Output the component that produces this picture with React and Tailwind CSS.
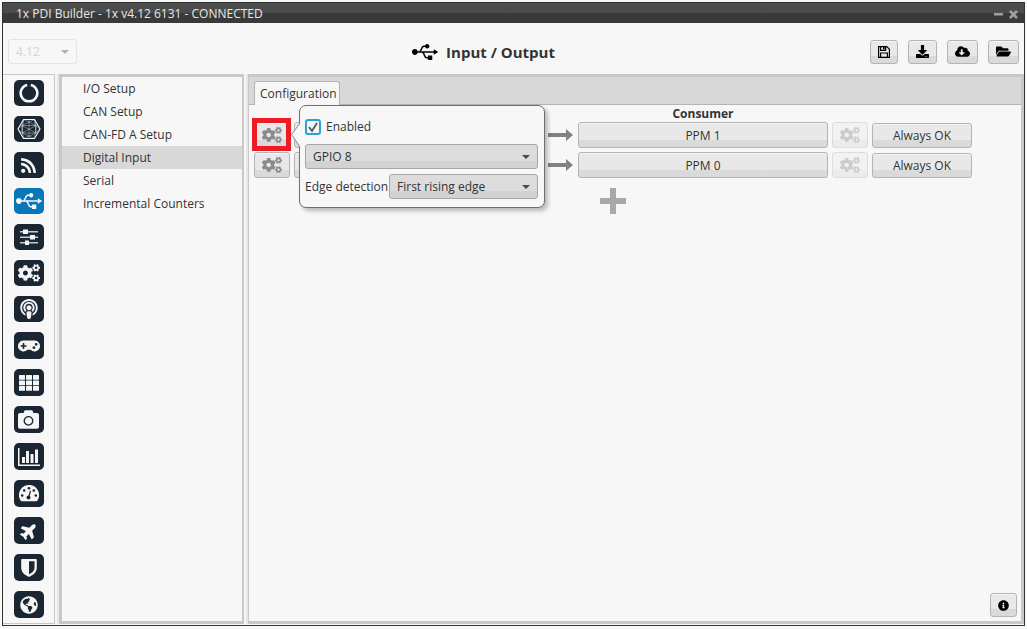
import { useState } from "react";
import {
  FaUsb,
  FaRss,
  FaCogs,
  FaPodcast,
  FaGamepad,
  FaCamera,
  FaPlane,
  FaGlobeAmericas,
  FaDownload,
  FaCloudDownloadAlt,
  FaFolderOpen,
  FaInfoCircle,
} from "react-icons/fa";

// Icons
const RingIcon = () => (
  <svg width="20" height="20" viewBox="0 0 20 20" fill="none" stroke="currentColor" strokeWidth="2.6">
    <path d="M8.2 1.9A8.3 8.3 0 1 0 11.8 1.9" />
  </svg>
);

const MeshIcon = () => (
  <svg width="24" height="22" viewBox="0 0 24 22" fill="none" stroke="currentColor">
    <path d="M6.5 1.5h11L23 11l-5.5 9.5h-11L1 11z" strokeWidth="1.1" />
    <path
      d="M6.5 1.5L19 7.5 17.5 20.5 5 15zM17.5 1.5L5 7.5 6.5 20.5 19 15zM1 11l4-3.500v7.500zM23 11l-4-3.500v7.500zM5 7.500h14M5 15h14M12 1.500v19M6.500 1.500L5 7.500M17.500 1.500L19 7.500M5 7.500L19 15M19 7.500L5 15"
      strokeWidth="0.5"
      opacity="0.75"
    />
  </svg>
);

const SlidersIcon = () => (
  <svg width="18" height="18" viewBox="0 0 18 18" fill="currentColor">
    <path d="M0 3h18v1.500H0zM0 8.500h18V10H0zM0 14h18v1.500H0z" opacity="0.8" />
    <path d="M3 1.500h5v4.500H3zM10 7h5v4.500h-5zM5 12.500h4V17H5z" />
  </svg>
);

const GridIcon = () => (
  <svg width="20" height="16" viewBox="0 0 20 16" fill="currentColor">
    {[0, 7, 14].map((x) => [0, 5.5, 11].map((y) => <rect key={`${x}-${y}`} x={x} y={y} width="6" height="4.800" rx="0.5" />))}
  </svg>
);

const ChartIcon = () => (
  <svg width="22" height="18" viewBox="0 0 22 18" fill="currentColor">
    <path d="M0 0h1.500v16.500H22V18H0zM4 9h3v6H4zM8 3h3v12H8zM12.500 6h3v9h-3zM17 1.500h3V15h-3z" />
  </svg>
);

const GaugeIcon = () => (
  <svg width="20" height="17" viewBox="0 0 20 17">
    <path d="M10 0a10 10 0 0 0-8.700 15c.3.600.8 1.200 1.400 1.200h14.600c.6 0 1.100-.6 1.400-1.200A10 10 0 0 0 10 0z" fill="currentColor" />
    <g fill="#1a2733">
      <circle cx="3.200" cy="10.500" r="1.300" />
      <circle cx="5.200" cy="5.500" r="1.300" />
      <circle cx="10" cy="3.200" r="1.300" />
      <circle cx="14.800" cy="5.500" r="1.300" />
      <circle cx="16.800" cy="10.500" r="1.300" />
      <circle cx="9.500" cy="12.500" r="2" />
      <path d="M10.800 5.800l1.200.3-1.700 6.500-1.200-.3z" />
    </g>
  </svg>
);

const ShieldIcon = () => (
  <svg width="16" height="18" viewBox="0 0 16 18" fill="currentColor">
    <path fillRule="evenodd" d="M1 0h14a.8.800 0 0 1 .8.800V9c0 4.500-4.300 7.500-7.800 9C4.500 16.500.200 13.500.200 9V.800A.8.800 0 0 1 1 0zM8 2.300v13c2.500-1.300 5.500-3.500 5.500-6.300V2.300z" />
  </svg>
);

const SaveIcon = () => (
  <svg width="12" height="12" viewBox="0 0 12 12" fill="none" stroke="currentColor" strokeWidth="1.2">
    <path d="M.6.6h8.200l2.600 2.600v8.200H.6z" />
    <path d="M2.600 11.400V7h6.800v4.400M2.600.6v3.800h5V.6" />
    <path d="M5 1h1.600v2.600H5z" fill="currentColor" stroke="none" />
  </svg>
);

const sideItems = [
  { name: "Vehicle", icon: <RingIcon />, height: "h-[26px]" },
  { name: "Platform", icon: <MeshIcon />, height: "h-[26px]" },
  { name: "Connections", icon: <FaRss size={17} />, height: "h-[26px]" },
  { name: "Input / Output", icon: <FaUsb size={26} />, height: "h-[26px]", active: true },
  { name: "Control", icon: <SlidersIcon />, height: "h-[26px]" },
  { name: "Devices", icon: <FaCogs size={22} />, height: "h-[26px]" },
  { name: "Sensors", icon: <FaPodcast size={20} />, height: "h-[26px]" },
  { name: "Stick", icon: <FaGamepad size={22} />, height: "h-[27px]" },
  { name: "Blocks", icon: <GridIcon />, height: "h-[27px]" },
  { name: "Camera", icon: <FaCamera size={21} />, height: "h-[27px]" },
  { name: "Telemetry", icon: <ChartIcon />, height: "h-[27px]" },
  { name: "Panel", icon: <GaugeIcon />, height: "h-[27px]" },
  { name: "Flight", icon: <FaPlane size={18} className="-rotate-45" />, height: "h-[27px]" },
  { name: "Safety", icon: <ShieldIcon />, height: "h-[27px]" },
  { name: "World", icon: <FaGlobeAmericas size={18} />, height: "h-[27px]" },
];

const menuItems = ["I/O Setup", "CAN Setup", "CAN-FD A Setup", "Digital Input", "Serial", "Incremental Counters"];

const toolbar = [
  { name: "Save", icon: <SaveIcon />, width: "w-7" },
  { name: "Download", icon: <FaDownload size={13} />, width: "w-[29px]" },
  { name: "Cloud download", icon: <FaCloudDownloadAlt size={15} />, width: "w-[31px]" },
  { name: "Open", icon: <FaFolderOpen size={15} />, width: "w-[31px]" },
];

const button =
  "flex items-center justify-center rounded-[3px] border border-[#b4b4b4] bg-linear-to-b from-[#e8e8e8] from-70% to-[#dadada] to-70% shadow-[inset_0_1px_0_#f4f4f4]";

const Combo = ({ className, children, ...props }) => (
  <div className={`relative ${className}`}>
    <select
      className="h-[25px] w-full appearance-none rounded-[3px] border border-[#a6a6a6] bg-linear-to-b from-[#dcdcdc] from-70% to-[#d2d2d2] to-70% pl-[7px] disabled:border-[#e4e4e4] disabled:bg-none disabled:text-[#d4d4d4] disabled:opacity-100"
      {...props}
    >
      {children}
    </select>
    <svg
      width="8"
      height="4"
      viewBox="0 0 8 4"
      className={`pointer-events-none absolute top-[11px] right-2 ${props.disabled ? "text-[#b0b0b0]" : "text-[#4a4a4a]"}`}
    >
      <path d="M0 0h8L4 4z" fill="currentColor" />
    </svg>
  </div>
);

const ArrowIcon = () => (
  <svg width="25" height="12" viewBox="0 0 25 12" className="text-[#828282]">
    <path d="M0 4h18V0l7 6-7 6V8H0z" fill="currentColor" />
  </svg>
);

const App = () => {
  const [selected, setSelected] = useState("Digital Input");
  const [enabled, setEnabled] = useState(true);
  const [pin, setPin] = useState("GPIO 8");
  const [edge, setEdge] = useState("First rising edge");

  return (
    <div className="h-screen bg-[#f7f9f9] p-0.5 pb-[3px] font-['Open_Sans',sans-serif] text-[12px] leading-4 text-[#333333]">
      <div className="flex h-full flex-col border border-[#333333] bg-[#f7f7f7]">
        {/* Title bar */}
        <div className="flex h-5 shrink-0 items-center justify-between bg-linear-to-b from-[#4b4d4c] from-50% to-[#3a3a3a] to-50% pt-0.5 pr-1.5 pl-[13px] text-[#e8e8e8]">
          <span>1x PDI Builder - 1x v4.12 6131 - CONNECTED</span>
          <div className="flex items-center gap-1.5 text-[#a0a0a0]">
            <button aria-label="Minimize">
              <svg width="9" height="9" viewBox="0 0 9 9"><path d="M0 3h9v2.500H0z" fill="currentColor" /></svg>
            </button>
            <button aria-label="Close">
              <svg width="9" height="9" viewBox="0 0 9 9"><path d="M1 1l7 7M8 1l-7 7" stroke="currentColor" strokeWidth="2.500" /></svg>
            </button>
          </div>
        </div>

        {/* Header */}
        <header className="flex h-[51px] shrink-0 items-center px-[5px] pt-1.5">
          <Combo className="w-[69px]" aria-label="Version" disabled>
            <option>4.12</option>
          </Combo>
          <h1 className="flex flex-1 items-center justify-center gap-2 pl-5 text-[15px] leading-6 font-bold">
            <FaUsb size={26} className="text-black" />
            Input / Output
          </h1>
          <div className="flex gap-2.5 text-black">
            {toolbar.map((item) => (
              <button key={item.name} aria-label={item.name} className={`${button} ${item.width} h-6`}>
                {item.icon}
              </button>
            ))}
          </div>
        </header>

        <main className="flex min-h-0 flex-1 pb-px">
          {/* Icon bar */}
          <nav className="flex w-[52px] shrink-0 flex-col items-center gap-2.5 border border-l-0 border-[#c6c6c6] pt-[5px]">
            {sideItems.map((item) => (
              <button
                key={item.name}
                aria-label={item.name}
                className={`flex w-[30px] shrink-0 items-center justify-center rounded-[5px] text-[#f5f5f5] ${item.height} ${item.active ? "bg-[#0877b9]" : "bg-[#1a2733]"}`}
              >
                {item.icon}
              </button>
            ))}
          </nav>
          <div className="w-1 shrink-0 border-r-2 border-[#e6e6e6]" />

          {/* Section menu */}
          <ul className="w-[185px] shrink-0 border-[3px] border-r-2 border-[#c8c8c8]">
            {menuItems.map((item) => (
              <li key={item}>
                <button
                  onClick={() => setSelected(item)}
                  className={`h-[23px] w-full pt-px pl-[21px] text-left ${selected === item ? "bg-[#d8d8d8]" : ""}`}
                >
                  {item}
                </button>
              </li>
            ))}
          </ul>
          <div className="w-1 shrink-0 border-r-2 border-[#e6e6e6]" />

          {/* Configuration */}
          <section className="flex min-w-0 flex-1 flex-col border-[3px] border-l border-[#c8c8c8]">
            <div className="flex h-7 shrink-0 items-end border-b border-[#b4b4b4] bg-[#d8d8d8] pl-[5px]">
              <button className="-mb-px h-6 rounded-t-[3px] border border-b-0 border-[#b4b4b4] bg-[#f7f7f7] pr-0.5 pl-[5px]">
                Configuration
              </button>
            </div>

            <div className="relative flex-1 pl-[5px]">
              <div className="grid grid-cols-[36px_250px_26px_250px_36px_100px] items-end gap-x-1 gap-y-1">
                <span className="col-start-4 -mb-1 h-[17px] pt-px text-center font-bold">Consumer</span>
                {[1, 0].map((n) => (
                  <div key={n} className="col-span-6 grid grid-cols-subgrid items-end">
                    <button aria-label={`Input settings ${n}`} className={`${button} relative h-[26px] text-[#8a8a8a]`}>
                      <FaCogs size={20} />
                      {n === 1 && <span className="absolute -top-[5px] -right-0.5 -bottom-1 -left-[3px] border-[5px] border-[#ed1c24]" />}
                    </button>
                    <button aria-label={`Producer ${n}`} className={`${button} h-[26px]`} />
                    <div className="flex h-[26px] items-center"><ArrowIcon /></div>
                    <button className={`${button} h-[26px] pt-0.5`}>PPM {n}</button>
                    <button
                      aria-label={`Output settings ${n}`}
                      disabled
                      className="flex h-[26px] items-center justify-center rounded-[3px] border border-[#dcdcdc] bg-linear-to-b from-[#f2f2f2] from-70% to-[#ebebeb] to-70% text-[#cccccc]"
                    >
                      <FaCogs size={20} />
                    </button>
                    <button className={`${button} h-[25px]`}>Always OK</button>
                  </div>
                ))}
                <button aria-label="Add" className="col-start-4 mt-1.5 ml-[22px] w-[26px]">
                  <svg width="26" height="26" viewBox="0 0 26 26"><path d="M10 0h6v10h10v6H16v10h-6V16H0v-6h10z" fill="#a8a8a8" /></svg>
                </button>
              </div>

              {/* Input popover */}
              <div className="absolute top-0 left-[50px] w-[246px] rounded-[7px] border border-[#6e6e6e] bg-[#f7f7f7] pt-[13px] pr-1.5 pb-2 pl-[5px] shadow-[3px_3px_4px_#00000040]">
                <svg width="10" height="27" viewBox="0 0 10 27" className="absolute top-4 -left-[9px]">
                  <path d="M10 0L0 12.500 10 26z" fill="#f7f7f7" />
                  <path d="M9 1L0.600 12.500 9 25" fill="none" stroke="#8a8a8a" />
                </svg>
                <label className="flex h-4 items-center gap-[5px]">
                  <span className="relative flex">
                    <input
                      type="checkbox"
                      checked={enabled}
                      onChange={(e) => setEnabled(e.target.checked)}
                      className="h-4 w-4 appearance-none rounded-[3px] border-2 border-[#2ba3cd] bg-[#f1f6f8]"
                    />
                    {enabled && (
                      <svg width="16" height="16" viewBox="0 0 16 16" className="pointer-events-none absolute inset-0">
                        <path d="M4 8l3 4 5-8" fill="none" stroke="#555555" strokeWidth="1.800" />
                      </svg>
                    )}
                  </span>
                  Enabled
                </label>
                <Combo className="mt-[9px]" aria-label="Pin" value={pin} onChange={(e) => setPin(e.target.value)}>
                  <option>GPIO 8</option>
                </Combo>
                <div className="mt-[5px] flex items-center justify-between">
                  <label htmlFor="edge">Edge detection</label>
                  <Combo className="w-[149px]" id="edge" value={edge} onChange={(e) => setEdge(e.target.value)}>
                    <option>First rising edge</option>
                  </Combo>
                </div>
              </div>

              <button aria-label="Info" className={`${button} absolute right-1 bottom-1 h-6 w-[27px] text-black`}>
                <FaInfoCircle size={11} />
              </button>
            </div>
          </section>
        </main>
      </div>
    </div>
  );
};

export default App;
